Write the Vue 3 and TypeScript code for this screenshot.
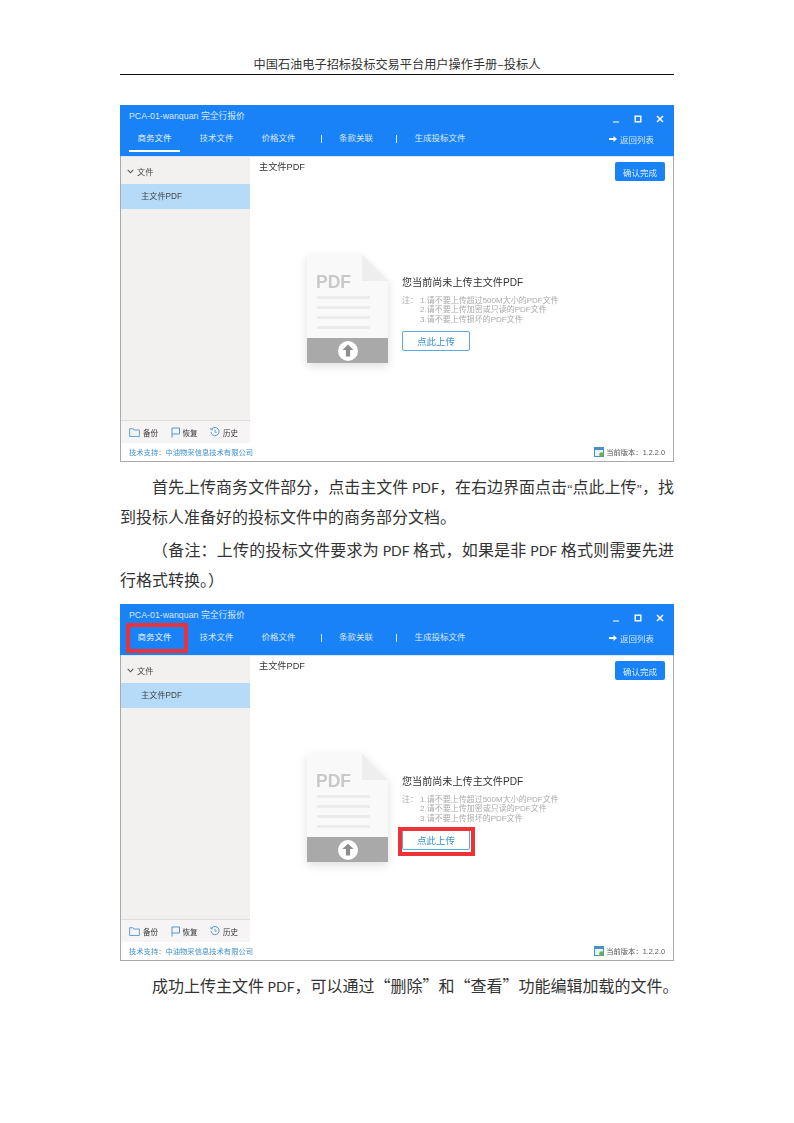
<script setup lang="ts">
const windows = [{ id: 1, marked: false }, { id: 2, marked: true }]
const notes = ['1.请不要上传超过500M大小的PDF文件', '2.请不要上传加密或只读的PDF文件', '3.请不要上传损坏的PDF文件']
</script>

<template>
  <div class="page">
    <header class="doc-head">中国石油电子招标投标交易平台用户操作手册–投标人</header>

    <template v-for="w in windows" :key="w.id">
      <section class="win" :class="w.marked ? 'win-b' : 'win-a'">
        <div class="bar">
          <div class="title-row">
            <span class="title">PCA-01-wanquan 完全行报价</span>
            <div class="controls">
              <svg width="8" height="8" viewBox="0 0 8 8"><path d="M1 7h6" stroke="#cfe4fd" stroke-width="1.3" /></svg>
              <svg width="8" height="8" viewBox="0 0 8 8"><rect x="1.2" y="1.2" width="5.6" height="5.6" fill="none" stroke="#fff" stroke-width="1.4" /></svg>
              <svg width="8" height="8" viewBox="0 0 8 8"><path d="M1 1l6 6M7 1L1 7" stroke="#fff" stroke-width="1.5" /></svg>
            </div>
          </div>
          <nav class="tabs">
            <span class="tab active">商务文件</span>
            <span class="tab">技术文件</span>
            <span class="tab">价格文件</span>
            <i class="sep sep-a"></i>
            <span class="tab">条款关联</span>
            <i class="sep sep-b"></i>
            <span class="tab">生成投标文件</span>
            <span class="back">
              <svg width="8" height="6" viewBox="0 0 8 6"><path d="M0 2h4.5V0L8 3 4.5 6V4H0z" fill="#fff" /></svg>
              返回列表
            </span>
          </nav>
        </div>

        <div class="body">
          <aside class="side">
            <div class="side-head">
              <svg width="7" height="5" viewBox="0 0 7 5"><path d="M.7.8l2.8 3L6.3.8" fill="none" stroke="#555" stroke-width="1.1" /></svg>
              文件
            </div>
            <div class="side-item">主文件PDF</div>
            <div class="tools">
              <span class="tool">
                <svg width="11" height="9" viewBox="0 0 12 10"><path d="M.6 9.4V.8h3.800l1 1.400h6v7.200z" fill="none" stroke="#3f8fd0" stroke-width=".9" /></svg>
                备份
              </span>
              <span class="tool">
                <svg width="9" height="11" viewBox="0 0 9 11"><path d="M1 10.500V1h7.500v6H1" fill="none" stroke="#3f8fd0" stroke-width=".9" /></svg>
                恢复
              </span>
              <span class="tool">
                <svg width="10" height="10" viewBox="0 0 11 11"><path d="M2 2.200A4.500 4.500 0 1 1 1 5.500" fill="none" stroke="#3f8fd0" stroke-width="1" /><path d="M1 .8v2.200h2.200M5.500 3v2.800h2" fill="none" stroke="#3f8fd0" stroke-width=".8" /></svg>
                历史
              </span>
            </div>
          </aside>

          <main class="main">
            <div class="main-head">
              <span class="main-title">主文件PDF</span>
              <button class="confirm" type="button">确认完成</button>
            </div>
            <div class="empty">
              <svg class="file" width="81" height="108" viewBox="0 0 81 108">
                <path d="M0 0h55l26 26v82H0z" fill="#f9f9f9" />
                <path d="M55 0l26 26H55z" fill="#eeeeee" />
                <text x="9" y="33" class="file-label">PDF</text>
                <rect x="10" y="41" width="53" height="3" fill="#ececec" />
                <rect x="10" y="51" width="53" height="3" fill="#ececec" />
                <rect x="10" y="61" width="53" height="3" fill="#ececec" />
                <rect x="10" y="71" width="53" height="3" fill="#ececec" />
                <rect x="0" y="83" width="81" height="25" fill="#a9a9a9" />
                <circle cx="41" cy="96" r="10" fill="#fff" />
                <path d="M41 89.500l5.500 5.500h-3.400v6.500h-4.200V95h-3.400z" fill="#8e8e8e" />
              </svg>
              <div class="info">
                <div class="info-title">您当前尚未上传主文件PDF</div>
                <div class="note">
                  <span class="note-tag">注：</span>
                  <div class="note-list">
                    <div v-for="n in notes" :key="n">{{ n }}</div>
                  </div>
                </div>
                <button class="upload" type="button">点此上传</button>
              </div>
            </div>
          </main>
        </div>

        <footer class="foot">
          <span class="support">技术支持：中油物采信息技术有限公司</span>
          <span class="version">
            <svg width="10" height="10" viewBox="0 0 10 10">
              <rect x=".5" y=".5" width="9" height="9" fill="#e8f2fb" stroke="#4a90c8" />
              <rect x=".5" y=".5" width="9" height="2.500" fill="#4a90c8" />
              <circle cx="7.500" cy="7.500" r="2.300" fill="#6fb04a" />
            </svg>
            当前版本：1.2.2.0
          </span>
        </footer>

        <template v-if="w.marked">
          <div class="mark mark-tab"></div>
          <div class="mark mark-upload"></div>
        </template>
      </section>

      <template v-if="!w.marked">
        <p class="para first">首先上传商务文件部分，点击主文件<span class="latin"> PDF</span>，在右边界面点击<span class="quote">“</span>点此上传<span class="quote">”</span>，找到投标人准备好的投标文件中的商务部分文档。</p>
        <p class="para">（备注：上传的投标文件要求为<span class="latin"> PDF </span>格式，如果是非<span class="latin"> PDF </span>格式则需要先进行格式转换。）</p>
      </template>
      <p v-else class="para first single">成功上传主文件<span class="latin"> PDF</span>，可以通过“删除”和“查看”功能编辑加载的文件。</p>
    </template>
  </div>
</template>

<style scoped>
.page {
  width: 794px;
  height: 1123px;
  box-sizing: border-box;
  padding: 56px 120px 0;
  background: #fff;
  overflow: hidden;
  font-family: "Liberation Sans", "Noto Sans CJK SC", sans-serif;
  color: #222;
}
.doc-head {
  height: 18px;
  line-height: 16px;
  text-align: center;
  font-size: 12.200px;
  border-bottom: 1px solid #111;
  font-family: "Noto Sans CJK SC", sans-serif;
  color: #333;
}
.win {
  position: relative;
  height: 357px;
  box-sizing: border-box;
  display: flex;
  flex-direction: column;
  border: 1px solid #aaa;
  border-top: 0;
  filter: blur(0.35px);
}
.win-a { margin-top: 30px; }
.win-b { margin-top: 10px; }
.bar {
  height: 51px;
  margin: 0 -1px;
  padding: 0 1px;
  background: #1a82f7;
  color: #d5e7fc;
  font-size: 8.500px;
  display: flex;
  flex-direction: column;
  flex: none;
}
.title-row {
  height: 22px;
  display: flex;
  align-items: center;
  justify-content: space-between;
  padding: 0 9px 0 8px;
}
.title { font-size: 8.800px; margin-top: -2px; }
.controls {
  display: flex;
  gap: 14px;
  align-items: center;
  padding-top: 5px;
}
.tabs {
  display: flex;
  height: 29px;
  padding-left: 8px;
  align-items: flex-start;
  padding-right: 19px;
}
.tab {
  padding: 0 8.500px 3px;
  margin-right: 11px;
  display: flex;
  align-items: center;
  border-bottom: 2px solid transparent;
  height: 25px;
  box-sizing: border-box;
}
.tab.active { border-bottom-color: #fff; color: #e8f2fe; }
.sep {
  width: 1px;
  height: 8px;
  margin-top: 8px;
  background: #d5e7fc;
}
.sep-a { margin-left: 6px; margin-right: 8.500px; }
.sep-b { margin-left: 3.500px; margin-right: 9px; }
.back {
  margin-left: auto;
  display: flex;
  align-items: center;
  gap: 3px;
  height: 26px;
  padding-bottom: 2px;
  box-sizing: border-box;
}
.body {
  flex: 1;
  display: flex;
  min-height: 0;
  border-top: 1px solid #d8e8f8;
}
.side {
  width: 129px;
  flex: none;
  background: #f3f0f0;
  display: flex;
  flex-direction: column;
  font-size: 8.200px;
  color: #444;
}
.side-head {
  height: 27px;
  display: flex;
  align-items: center;
  gap: 3px;
  padding-left: 6px;
  padding-top: 1px;
  box-sizing: border-box;
}
.side-item {
  height: 25px;
  line-height: 25px;
  background: #b5dbf8;
  padding-left: 20px;
}
.tools {
  margin-top: auto;
  height: 22px;
  border-top: 1px solid #ddd;
  display: flex;
  align-items: center;
  padding-left: 8px;
  gap: 12.500px;
  font-size: 7.500px;
  background: #f6f4f4;
  color: #333;
}
.tool {
  display: flex;
  align-items: center;
  gap: 3px;
}
.main {
  flex: 1;
  padding: 4px 8px 0 9px;
  background: #fff;
  display: flex;
  flex-direction: column;
}
.main-head {
  display: flex;
  justify-content: space-between;
  align-items: flex-start;
  height: 24px;
}
.main-title { font-size: 9.200px; color: #333; line-height: 12px; }
.confirm {
  width: 50px;
  height: 19px;
  margin-top: 1px;
  border: 0;
  border-radius: 2px;
  padding: 0;
  background: #1a82f7;
  color: #dcebfd;
  font: 8.500px "Liberation Sans", "Noto Sans CJK SC", sans-serif;
}
.empty {
  display: flex;
  margin-top: 70px;
  padding-left: 48px;
  gap: 14px;
  align-items: flex-start;
}
.file {
  flex: none;
  filter: drop-shadow(0 3px 5px rgba(0, 0, 0, 0.13));
}
.file-label {
  font: bold 17.500px "Liberation Sans", sans-serif;
  fill: #c9c9c9;
}
.info { padding-top: 21px; }
.info-title { font-size: 10.100px; line-height: 14px; color: #333; }
.note {
  display: flex;
  margin-top: 6px;
  font-size: 8px;
  line-height: 9.300px;
  color: #aaa;
}
.note-tag { width: 18px; flex: none; }
.upload {
  display: block;
  width: 68px;
  height: 20px;
  margin-top: 7px;
  padding: 0;
  background: #fff;
  border: 1px solid #5aa9dc;
  border-radius: 2px;
  color: #3c95d6;
  font: 9.500px "Liberation Sans", "Noto Sans CJK SC", sans-serif;
}
.foot {
  height: 18px;
  flex: none;
  display: flex;
  align-items: center;
  justify-content: space-between;
  padding: 0 8px;
  font-size: 7.300px;
  background: #fff;
}
.support { color: #3f8fd0; }
.version {
  display: flex;
  align-items: center;
  gap: 2px;
  color: #555;
}
.mark {
  position: absolute;
  box-sizing: border-box;
  border: 4px solid #ee3338;
}
.mark-tab { left: 5px; top: 19px; width: 62px; height: 30px; }
.mark-upload { left: 277px; top: 223px; width: 77px; height: 29px; }
.para {
  margin: 3px 0 0;
  height: auto;
  font-family: "Noto Sans CJK SC", sans-serif;
  font-size: 16px;
  line-height: 30px;
  text-align: justify;
  text-indent: 32px;
  color: #333;
}
.latin { font-family: Lato, sans-serif; font-size: 14px; line-height: 0; }
.quote { font-family: "Liberation Serif", serif; font-size: 12px; line-height: 0; }
.first { margin-top: 9px; }
.single { white-space: nowrap; }
</style>
